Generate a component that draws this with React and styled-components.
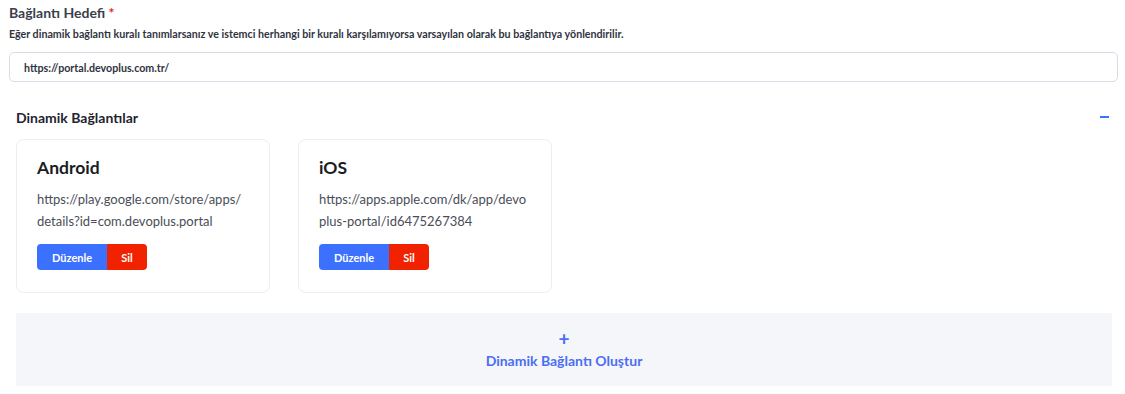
import React from "react";
import styled, { createGlobalStyle } from "styled-components";

const GlobalStyle = createGlobalStyle`
  body {
    margin: 0;
    background: #fff;
    font-family: Lato, "Noto Sans", sans-serif;
    color: #1f2430;
  }
`;

const links = [
  { title: "Android", url: "https://play.google.com/store/apps/details?id=com.devoplus.portal" },
  { title: "iOS", url: "https://apps.apple.com/dk/app/devoplus-portal/id6475267384" },
];

function App() {
  return (
    <Page>
      <GlobalStyle />
      <Label>
        Bağlantı Hedefi <Required>*</Required>
      </Label>
      <Hint>
        Eğer dinamik bağlantı kuralı tanımlarsanız ve istemci herhangi bir kuralı karşılamıyorsa varsayılan olarak bu bağlantıya yönlendirilir.
      </Hint>
      <Input defaultValue="https://portal.devoplus.com.tr/" />

      <Section>
        <SectionHeader>
          <SectionTitle>Dinamik Bağlantılar</SectionTitle>
          <Collapse aria-label="Daralt" />
        </SectionHeader>
        <Cards>
          {links.map((l) => (
            <Card key={l.title}>
              <CardTitle>{l.title}</CardTitle>
              <CardUrl>{l.url}</CardUrl>
              <ButtonGroup>
                <ActionButton color="#3b71fe">Düzenle</ActionButton>
                <ActionButton color="#f02200">Sil</ActionButton>
              </ButtonGroup>
            </Card>
          ))}
        </Cards>
        <AddBox>
          <Plus>+</Plus>
          <AddText>Dinamik Bağlantı Oluştur</AddText>
        </AddBox>
      </Section>
    </Page>
  );
}

const Page = styled.div`
  padding: 4px 7px 0 9px;
`;

const Label = styled.div`
  font-size: 14px;
  font-weight: 700;
  color: #3b3f4a;
  line-height: 18px;
`;

const Required = styled.span`
  color: #e5252a;
`;

const Hint = styled.div`
  margin-top: 5px;
  font-size: 10.7px;
  font-weight: 700;
  color: #2f3440;
  line-height: 14px;
`;

const Input = styled.input`
  display: block;
  box-sizing: border-box;
  width: 100%;
  height: 30px;
  margin-top: 11px;
  padding: 0 14px;
  border: 1px solid #d9dbe7;
  border-radius: 5px;
  font-family: inherit;
  font-size: 10.7px;
  font-weight: 700;
  color: #2f3440;
  outline: none;
`;

const Section = styled.div`
  padding: 0 6px 0 7px;
`;

const SectionHeader = styled.div`
  display: flex;
  align-items: center;
  justify-content: space-between;
  height: 34px;
  margin-top: 18px;
`;

const SectionTitle = styled.div`
  font-size: 14px;
  font-weight: 700;
  color: #1f2430;
`;

const Collapse = styled.span`
  display: block;
  width: 9px;
  height: 2px;
  margin-right: 3px;
  background: #3b71fe;
`;

const Cards = styled.div`
  display: flex;
  gap: 28px;
  margin-top: 5px;
`;

const Card = styled.div`
  box-sizing: border-box;
  width: 254px;
  height: 154px;
  padding: 17px 23px 17px 20px;
  border: 1px solid #eceef3;
  border-radius: 8px;
  background: #fff;
`;

const CardTitle = styled.div`
  font-size: 17.5px;
  font-weight: 700;
  color: #1a1d24;
  line-height: 22px;
`;

const CardUrl = styled.div`
  margin-top: 9px;
  font-size: 13px;
  color: #4a4e58;
  line-height: 22px;
  word-break: break-all;
`;

const ButtonGroup = styled.div`
  display: flex;
  margin-top: 12px;
`;

const ActionButton = styled.button`
  height: 26px;
  padding: 0 15px;
  border: none;
  background: ${(p) => p.color};
  color: #fff;
  font-family: inherit;
  font-size: 11px;
  font-weight: 700;
  &:first-child {
    border-radius: 4px 0 0 4px;
  }
  &:last-child {
    padding: 0 14px;
    border-radius: 0 4px 4px 0;
  }
`;

const AddBox = styled.div`
  display: flex;
  flex-direction: column;
  align-items: center;
  justify-content: center;
  height: 73px;
  margin-top: 20px;
  background: #f5f6fa;
  color: #4a6ef5;
`;

const Plus = styled.div`
  font-size: 19px;
  line-height: 18px;
  font-weight: 700;
`;

const AddText = styled.div`
  margin-top: 4px;
  font-size: 14px;
  font-weight: 700;
`;

export default App;
